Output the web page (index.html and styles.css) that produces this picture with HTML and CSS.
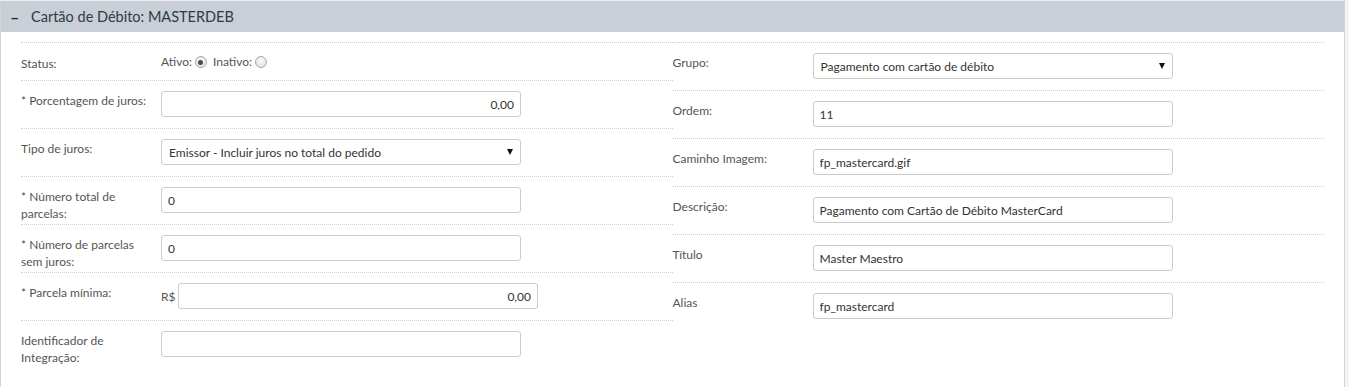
FILE: index.html
```html
<!DOCTYPE html>
<html lang="pt-BR">
<head>
<meta charset="utf-8">
<title>Cartão de Débito: MASTERDEB</title>
<link rel="stylesheet" href="styles.css">
</head>
<body>
<div class="panel">
  <div class="panel-head"><span class="toggle">–</span><span class="title">Cartão de Débito: MASTERDEB</span></div>
  <div class="panel-body">
    <div class="col">
      <div class="row row-status">
        <label class="lbl">Status:</label>
        <div class="field radios">
          <span>Ativo:</span><span class="radio checked"></span>
          <span>Inativo:</span><span class="radio"></span>
        </div>
      </div>
      <div class="row">
        <label class="lbl">* Porcentagem de juros:</label>
        <div class="field"><input class="inp num" type="text" value="0,00"></div>
      </div>
      <div class="row">
        <label class="lbl">Tipo de juros:</label>
        <div class="field"><div class="sel"><span>Emissor - Incluir juros no total do pedido</span><i class="arrow"></i></div></div>
      </div>
      <div class="row">
        <label class="lbl">* Número total de parcelas:</label>
        <div class="field"><input class="inp" type="text" value="0"></div>
      </div>
      <div class="row">
        <label class="lbl">* Número de parcelas sem juros:</label>
        <div class="field"><input class="inp" type="text" value="0"></div>
      </div>
      <div class="row">
        <label class="lbl">* Parcela mínima:</label>
        <div class="field money"><span class="cur">R$</span><input class="inp num" type="text" value="0,00"></div>
      </div>
      <div class="row">
        <label class="lbl">Identificador de Integração:</label>
        <div class="field"><input class="inp" type="text" value=""></div>
      </div>
    </div>
    <div class="col">
      <div class="row">
        <label class="lbl">Grupo:</label>
        <div class="field"><div class="sel"><span>Pagamento com cartão de débito</span><i class="arrow"></i></div></div>
      </div>
      <div class="row">
        <label class="lbl">Ordem:</label>
        <div class="field"><input class="inp" type="text" value="11"></div>
      </div>
      <div class="row">
        <label class="lbl">Caminho Imagem:</label>
        <div class="field"><input class="inp" type="text" value="fp_mastercard.gif"></div>
      </div>
      <div class="row">
        <label class="lbl">Descrição:</label>
        <div class="field"><input class="inp" type="text" value="Pagamento com Cartão de Débito MasterCard"></div>
      </div>
      <div class="row">
        <label class="lbl">Título</label>
        <div class="field"><input class="inp" type="text" value="Master Maestro"></div>
      </div>
      <div class="row">
        <label class="lbl">Alias</label>
        <div class="field"><input class="inp" type="text" value="fp_mastercard"></div>
      </div>
    </div>
  </div>
</div>
</body>
</html>
```
FILE: styles.css
```css
* { box-sizing: border-box; }
html, body { margin: 0; padding: 0; }
body {
  background: #f3f3f3;
  font-family: Lato, "Liberation Sans", sans-serif;
  font-size: 12px;
  color: #555;
}
.panel {
  width: 1345px;
  min-height: 387px;
  background: #fff;
  border-left: 1px solid #d4d4d4;
  border-right: 1px solid #d4d4d4;
  border-top: 1px solid #eef0f2;
}
.panel-head {
  height: 31px;
  background: #c8cfd6;
  display: flex;
  align-items: center;
  padding-left: 9px;
  font-size: 14.5px;
  color: #2f3a46;
}
.toggle {
  font-weight: bold;
  font-size: 16px;
  color: #1e2a36;
  width: 21px;
}
.panel-body {
  display: grid;
  grid-template-columns: 1fr 1fr;
  padding: 10px 20px 0 20px;
}
.row {
  display: flex;
  align-items: flex-start;
  border-top: 1px dotted #cfcfcf;
  padding-top: 10px;
  height: 48px;
}
.row-status { height: 38px; padding-top: 11px; }
.lbl {
  width: 140px;
  flex: none;
  padding-right: 6px;
  line-height: 17px;
  padding-top: 1px;
}
.field {
  display: flex;
  align-items: center;
}
.radios {
  height: 16px;
  line-height: 16px;
}
.radios .radio { margin-left: 3px; }
.radios .radio + span { margin-left: 6px; }
.radio {
  width: 12px;
  height: 12px;
  border-radius: 50%;
  border: 1px solid #a9a9a9;
  background: radial-gradient(circle at 50% 40%, #fdfdfd, #dadada);
  position: relative;
}
.radio.checked::after {
  content: "";
  position: absolute;
  left: 2.5px; top: 2.5px;
  width: 5px; height: 5px;
  border-radius: 50%;
  background: #4a4a4a;
}
.inp, .sel {
  width: 360px;
  height: 26px;
  border: 1px solid #cbcbcb;
  border-radius: 3px;
  background: #fff;
  font-family: inherit;
  font-size: 12px;
  color: #333;
  padding: 0 6px;
  outline: none;
}
.inp.num { text-align: right; }
.sel {
  display: flex;
  align-items: center;
  justify-content: space-between;
  padding: 0 7px 0 7px;
}
.arrow {
  width: 0; height: 0;
  border-left: 3.5px solid transparent;
  border-right: 3.5px solid transparent;
  border-top: 6px solid #111;
}
.money .cur {
  width: 17px;
  color: #555;
}
```
